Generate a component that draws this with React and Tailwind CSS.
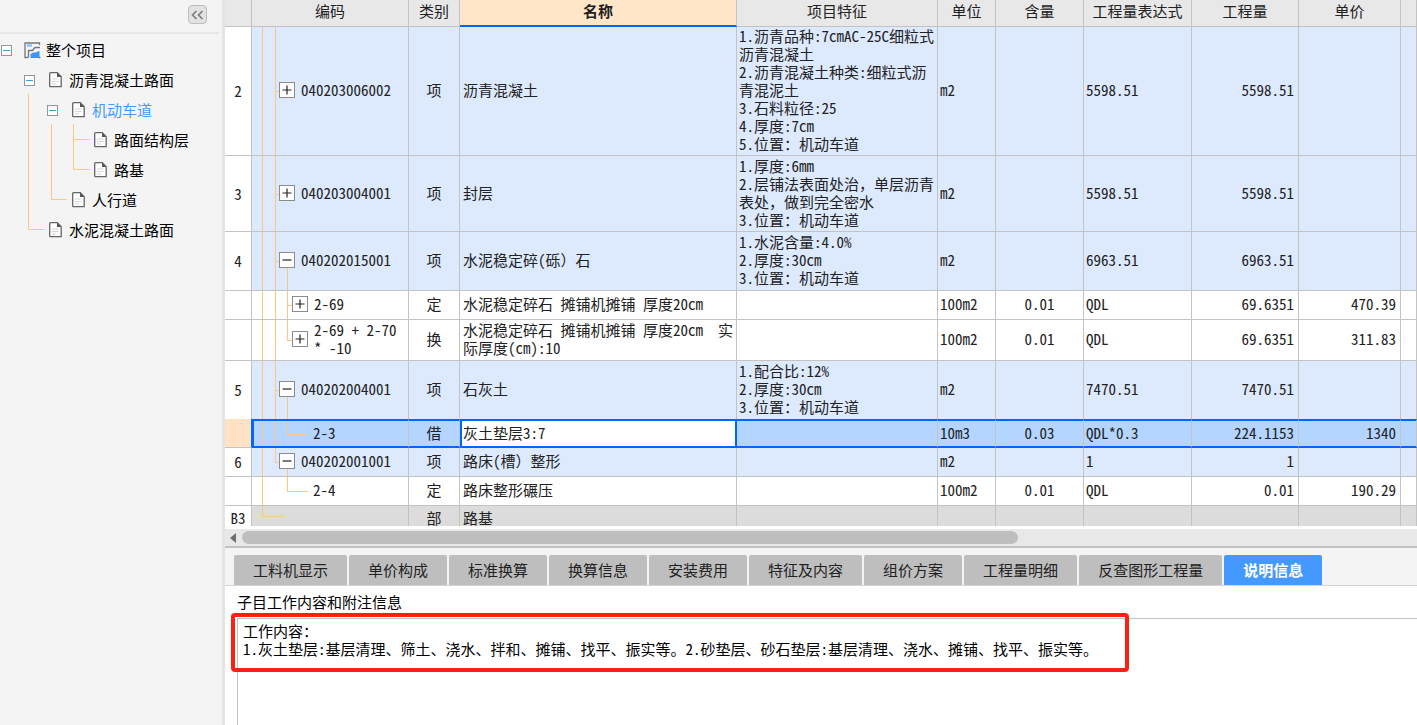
import React, { useState } from "react";
import clsx from "clsx";

const tree = [
  { name: "整个项目", pad: "pl-[1px]", open: true, root: true },
  { name: "沥青混凝土路面", pad: "pl-6", open: true },
  { name: "机动车道", pad: "pl-[47px]", open: true },
  { name: "路面结构层", pad: "pl-[69px]" },
  { name: "路基", pad: "pl-[69px]" },
  { name: "人行道", pad: "pl-[47px]" },
  { name: "水泥混凝土路面", pad: "pl-6" },
];

const columns = [
  { title: "", width: "w-[27px]" },
  { title: "编码", width: "w-[157px]" },
  { title: "类别", width: "w-[51px]" },
  { title: "名称", width: "w-[277px]", active: true },
  { title: "项目特征", width: "w-[201px]" },
  { title: "单位", width: "w-[58px]" },
  { title: "含量", width: "w-[88px]" },
  { title: "工程量表达式", width: "w-[108px]" },
  { title: "工程量", width: "w-[107px]" },
  { title: "单价", width: "w-[102px]" },
  { title: "", width: "" },
];

// guides: one entry per tree level, "full" | "top" | "bottom" | ""
const rows = [
  {
    no: "2", code: "040203006002", level: 1, toggle: "+", guides: ["full", "full", ""], height: "h-[129px]",
    type: "项", name: "沥青混凝土",
    feature: "1.沥青品种:7cmAC-25C细粒式\n沥青混凝土\n2.沥青混凝土种类:细粒式沥\n青混泥土\n3.石料粒径:25\n4.厚度:7cm\n5.位置：机动车道",
    unit: "m2", expr: "5598.51", qty: "5598.51",
  },
  {
    no: "3", code: "040203004001", level: 1, toggle: "+", guides: ["full", "full", ""], height: "h-[76px]",
    type: "项", name: "封层",
    feature: "1.厚度:6mm\n2.层铺法表面处治，单层沥青\n表处，做到完全密水\n3.位置：机动车道",
    unit: "m2", expr: "5598.51", qty: "5598.51",
  },
  {
    no: "4", code: "040202015001", level: 1, toggle: "-", guides: ["full", "full", "bottom"], height: "h-[59px]",
    type: "项", name: "水泥稳定碎(砾）石",
    feature: "1.水泥含量:4.0%\n2.厚度:30cm\n3.位置：机动车道",
    unit: "m2", expr: "6963.51", qty: "6963.51",
  },
  {
    no: "", code: "2-69", level: 2, toggle: "+", guides: ["full", "full", "full"], height: "h-[29px]",
    type: "定", name: "水泥稳定碎石 摊铺机摊铺 厚度20cm",
    unit: "100m2", content: "0.01", expr: "QDL", qty: "69.6351", price: "470.39",
  },
  {
    no: "", code: "2-69 + 2-70\n* -10", level: 2, toggle: "+", guides: ["full", "full", "top"], height: "h-[41px]",
    type: "换", name: "水泥稳定碎石 摊铺机摊铺 厚度20cm  实\n际厚度(cm):10",
    unit: "100m2", content: "0.01", expr: "QDL", qty: "69.6351", price: "311.83",
  },
  {
    no: "5", code: "040202004001", level: 1, toggle: "-", guides: ["full", "full", "bottom"], height: "h-[58px]",
    type: "项", name: "石灰土",
    feature: "1.配合比:12%\n2.厚度:30cm\n3.位置：机动车道",
    unit: "m2", expr: "7470.51", qty: "7470.51",
  },
  {
    no: "", code: "2-3", level: 2, guides: ["full", "full", "top"], height: "h-[29px]", selected: true,
    type: "借", name: "灰土垫层3:7",
    unit: "10m3", content: "0.03", expr: "QDL*0.3", qty: "224.1153", price: "1340",
  },
  {
    no: "6", code: "040202001001", level: 1, toggle: "-", guides: ["full", "top", "bottom"], height: "h-[29px]",
    type: "项", name: "路床(槽）整形",
    unit: "m2", expr: "1", qty: "1",
  },
  {
    no: "", code: "2-4", level: 2, guides: ["full", "", "top"], height: "h-[29px]",
    type: "定", name: "路床整形碾压",
    unit: "100m2", content: "0.01", expr: "QDL", qty: "0.01", price: "190.29",
  },
  {
    no: "B3", code: "", level: 0, guides: ["top", "", ""], height: "h-5", section: true,
    type: "部", name: "路基",
  },
];

const tabs = [
  "工料机显示", "单价构成", "标准换算", "换算信息", "安装费用",
  "特征及内容", "组价方案", "工程量明细", "反查图形工程量", "说明信息",
];

const note =
  "工作内容：\n1.灰土垫层:基层清理、筛土、浇水、拌和、摊铺、找平、振实等。2.砂垫层、砂石垫层:基层清理、浇水、摊铺、找平、振实等。";

const ProjectIcon = () => (
  <svg width="17" height="17" viewBox="0 0 17 17" fill="none">
    <path d="M15.500 3V1H1v14.500h3" stroke="#777" strokeWidth="1.300" />
    <path d="M3 3.500h5" stroke="#8fc1ff" strokeWidth="2.500" />
    <path d="M4.500 15.500V8.500h4L11 5.500h5" stroke="#777" strokeWidth="1.300" />
    <path d="M6.500 16v-4l3-1.500h2l4-1.500v7z" fill="#3f95f7" />
    <path d="M14 15.500h2.500" stroke="#777" strokeWidth="1.300" />
  </svg>
);

const DocIcon = () => (
  <svg width="13" height="16" viewBox="0 0 13 16" fill="none">
    <path d="M1.500.700h6.800l3.900 4v10H1.500a.8.8 0 0 1-.8-.8V1.500a.8.8 0 0 1 .8-.8z" fill="#fff" stroke="#666" strokeWidth="1.300" />
    <path d="M8 .700v4.300h4.300z" fill="#555" />
    <path d="M3 7h6.500M3 9.500h6.500M3 12h4" stroke="#d5d5d5" />
  </svg>
);

const Toggle = ({ sign }) => (
  <button
    type="button"
    aria-label={sign === "+" ? "展开" : "折叠"}
    className="w-4 h-4 shrink-0 flex items-center justify-center bg-white border border-[#8c8c8c]"
  >
    <svg width="10" height="10" viewBox="0 0 10 10" stroke="#222" strokeWidth="1.2">
      <path d={sign === "+" ? "M.5 5h9M5 .5v9" : "M.5 5h9"} />
    </svg>
  </button>
);

// latin is set half-width, these two marks keep their full width
const CellText = ({ text = "" }) =>
  text.split(/([，）])/).map((part, i) =>
    i % 2 ? (
      <span key={i} className="inline-block [font-feature-settings:normal]">{part}</span>
    ) : (
      part
    )
  );

const guideLeft = ["left-[10px]", "left-[23px]", "left-[35px]"];
const guideSpan = { full: "inset-y-0", top: "top-0 bottom-1/2", bottom: "top-1/2 bottom-0" };

const CodeCell = ({ row }) => (
  <>
    {row.guides.map(
      (g, i) =>
        g && <span key={i} className={clsx("absolute w-px bg-[#fdc681]", guideLeft[i], guideSpan[g])} />
    )}
    <span
      className={clsx(
        "absolute top-1/2 h-px bg-[#fdc681]",
        row.level === 0 && "left-[10px] w-[21px]",
        row.level === 1 && "left-[23px] w-1",
        row.level === 2 && (row.toggle ? "left-[35px] w-[5px]" : "left-[35px] w-[21px]")
      )}
    />
    <div
      className={clsx(
        "relative flex items-center",
        row.level === 2 ? (row.toggle ? "pl-10" : "pl-[61px]") : "pl-[27px]"
      )}
    >
      {row.toggle && <Toggle sign={row.toggle} />}
      <span className={row.toggle ? "ml-[6px]" : ""}>{row.code}</span>
    </div>
  </>
);

const Sidebar = () => {
  const [current, setCurrent] = useState("机动车道");

  return (
    <aside className="w-[225px] shrink-0 bg-[#f4f4f4] border-r-[3px] border-[#e4e4e4]">
      <div className="h-[34px] flex justify-end mr-[3px] pr-3 pt-[5px] border-b-2 border-[#e6e6e6]">
        <button
          type="button"
          aria-label="收起"
          className="w-[19px] h-[19px] flex items-center justify-center rounded-sm border border-[#bdbdbd] bg-[#e2e2e2]"
        >
          <svg width="13" height="10" viewBox="0 0 13 10" fill="none" stroke="#777" strokeWidth="1.500">
            <path d="M5.500 1l-4 4 4 4M11.500 1l-4 4 4 4" />
          </svg>
        </button>
      </div>
      <nav className="relative pt-px">
        <svg className="absolute left-0 top-0 pointer-events-none" width="100" height="210" fill="none" stroke="#fdc681" strokeWidth="1">
          <path d="M28.500 60v135.500h16M51.500 90v75.500h15M73.500 90v45.500h16M73.500 105.500h16" />
        </svg>
        <ul>
          {tree.map((item) => (
            <li key={item.name} className={clsx("relative h-[30px] flex items-center", item.pad)}>
              {item.open ? (
                <button type="button" aria-label="折叠" className="w-[11px] h-[11px] flex items-center justify-center bg-white border border-[#969696]">
                  <span className="w-[7px] h-px bg-[#2fa3dc]" />
                </button>
              ) : (
                <span className="w-[11px]" />
              )}
              <span className="w-[17px] ml-3 flex justify-center">
                {item.root ? <ProjectIcon /> : <DocIcon />}
              </span>
              <button
                type="button"
                onClick={() => setCurrent(item.name)}
                className={clsx("ml-[5px] whitespace-nowrap", item.name === current ? "text-[#4499ff]" : "text-black")}
              >
                {item.name}
              </button>
            </li>
          ))}
        </ul>
      </nav>
    </aside>
  );
};

const BillTable = () => (
  <table className="w-full table-fixed border-separate border-spacing-0 text-[#222]">
    <thead>
      <tr className="h-[27px]">
        {columns.map((col, i) => (
          <th
            key={i}
            scope="col"
            className={clsx(
              "p-0 pb-1 leading-[18px] whitespace-nowrap border-r border-r-[#c3c3c3]",
              col.width,
              col.active
                ? "bg-[#ffe6c8] font-bold border-b-2 border-b-[#0066ff]"
                : "bg-[#e8e8e8] font-normal border-b border-b-[#c3c3c3]"
            )}
          >
            {col.title}
          </th>
        ))}
      </tr>
    </thead>
    <tbody>
      {rows.map((row, i) => {
        const blueRow = !row.selected && row.level === 1;
        const lastOne = i === rows.length - 1;
        const line = clsx(
          "border-r whitespace-pre",
          row.section ? "pt-1 leading-4" : "leading-[18px]",
          !row.selected && !lastOne && !rows[i + 1].selected && "border-b border-b-[#c3c3c3]"
        );
        const cell = clsx(
          line,
          "border-r-[#c3c3c3]",
          !row.section && "pb-[2px]",
          row.selected && "bg-[#b3d5ff] border-y-2 border-y-[#0066ff]",
          blueRow && "bg-[#dde9fd]",
          row.section && "bg-[#dcdcdc]"
        );
        return (
          <tr key={i} className={row.height}>
            <td
              className={clsx(
                line,
                "text-center",
                row.selected ? "bg-[#ffe2c4] border-r-[#0066ff] border-b border-b-[#c3c3c3]" : "bg-white border-r-[#c3c3c3]"
              )}
            >
              {row.no}
            </td>
            <td className={clsx(cell, "relative", row.selected && "shadow-[inset_2px_0_0_#0066ff]")}>
              <CodeCell row={row} />
            </td>
            <td className={clsx(cell, "text-center")}>{row.type}</td>
            {row.selected ? (
              <td className={clsx(line, "pb-[2px] bg-white border-l-2 border-r-2 border-y-2 border-[#0066ff]")}>
                <input aria-label="名称" defaultValue={row.name} className="block w-full h-[18px] pl-px outline-none" />
              </td>
            ) : (
              <td className={clsx(cell, "pl-[3px]")}>
                <CellText text={row.name} />
              </td>
            )}
            <td className={clsx(cell, "pl-[2px]")}>
              <CellText text={row.feature} />
            </td>
            <td className={clsx(cell, "pl-[2px]")}>{row.unit}</td>
            <td className={clsx(cell, "text-center")}>{row.content}</td>
            <td className={clsx(cell, "pl-[2px]")}>{row.expr}</td>
            <td className={clsx(cell, "pr-1 text-right")}>{row.qty}</td>
            <td className={clsx(cell, "pr-1 text-right")}>{row.price}</td>
            <td className={cell} />
          </tr>
        );
      })}
    </tbody>
  </table>
);

const ScrollBar = () => (
  <div className="flex items-center h-[22px] border-t-[3px] border-t-white border-b-2 border-b-[#c3c3c3] bg-[#e8e8e8]">
    <button type="button" aria-label="向左滚动" className="w-[17px] shrink-0 flex justify-center">
      <svg width="7" height="10" viewBox="0 0 7 10" fill="#6e6e6e">
        <path d="M6 0v10L0 5z" />
      </svg>
    </button>
    <div className="flex-1">
      <div className="w-[66%] h-[13px] rounded-full bg-[#bebebe]" />
    </div>
  </div>
);

const DetailPane = () => {
  const [tab, setTab] = useState("说明信息");

  return (
    <section className="flex-1 flex flex-col">
      <div role="tablist" className="flex gap-[2px] pt-[7px] pl-[9px] bg-[#f4f4f4] border-b border-[#d4d4d4]">
        {tabs.map((t) => (
          <button
            key={t}
            type="button"
            role="tab"
            aria-selected={t === tab}
            onClick={() => setTab(t)}
            className={clsx(
              "h-[30px] px-[19px] rounded-t-xs whitespace-nowrap",
              t === tab ? "bg-[#4499ff] text-white font-bold" : "bg-[#bebebe] text-[#222]"
            )}
          >
            {t}
          </button>
        ))}
      </div>
      <div className="flex-1 flex flex-col pl-3 pt-[7px] bg-white text-black">
        <label htmlFor="note" className="leading-[18px]">子目工作内容和附注信息</label>
        <div className="relative flex-1 flex mt-[7px]">
          <textarea
            id="note"
            readOnly
            value={note}
            className="flex-1 resize-none border-t border-l border-[#c3c3c3] pl-[5px] pt-[3px] leading-[18px] outline-none"
          />
          <div className="absolute -left-[6px] -top-[5px] w-[898px] h-[59px] border-4 border-[#ff2015] rounded-sm pointer-events-none" />
        </div>
      </div>
    </section>
  );
};

const App = () => (
  <div
    lang="zh-CN"
    className="flex min-h-screen overflow-hidden bg-white text-[15px] leading-[18px] font-['Noto_Sans_CJK_SC',sans-serif] [font-feature-settings:'hwid']"
  >
    <Sidebar />
    <main className="flex-1 min-w-0 flex flex-col">
      <BillTable />
      <ScrollBar />
      <DetailPane />
    </main>
  </div>
);

export default App;
